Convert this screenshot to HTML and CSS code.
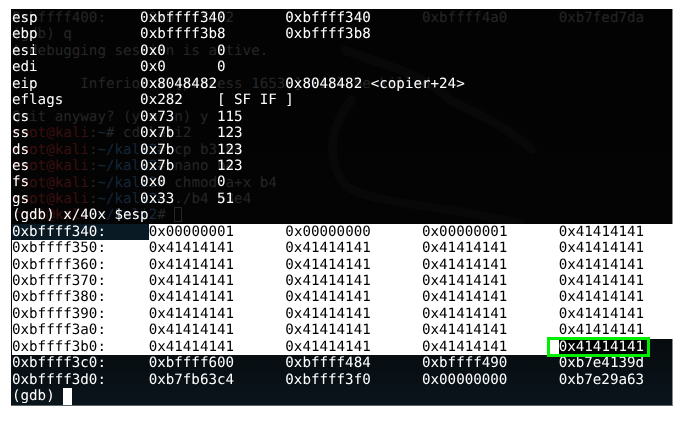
FILE: index.html
```html
<!DOCTYPE html>
<html lang="en">
<head>
<meta charset="utf-8">
<title>gdb</title>
<link rel="stylesheet" href="styles.css">
</head>
<body>
<main class="term">
<svg class="logo" viewBox="0 0 662 397" aria-hidden="true">
<path d="M341 91C319 116 314 151 334 176C359 196 439 196 509 215"/>
<path d="M334 41C369 56 409 61 439 91C469 106 494 116 521 141"/>
</svg>
<pre class="ghost"><span>0xbffff400:     0xbffff3f2      0xbffff340      0xbffff4a0      0xb7fed7da</span>
<span>(gdb) q</span>
<span>A debugging session is active.</span>

<span>        Inferior 1 [process 16536] will be killed.</span>

<span>Quit anyway? (y or n) y</span>
<span><b>root@kali</b>:<i>~</i># cd kali2</span>
<span><b>root@kali</b>:<i>~/kali2</i># cp b3 b4</span>
<span><b>root@kali</b>:<i>~/kali2</i># nano b4</span>
<span><b>root@kali</b>:<i>~/kali2</i># chmod a+x b4</span>
<span><b>root@kali</b>:<i>~/kali2</i># ./b4 b3e4</span>
<span><b>root@kali</b>:<i>~/kali2</i># <em class="hollow"></em></span></pre>
<div class="screen">
<div class="line">esp            0xbffff340       0xbffff340</div>
<div class="line">ebp            0xbffff3b8       0xbffff3b8</div>
<div class="line">esi            0x0      0</div>
<div class="line">edi            0x0      0</div>
<div class="line">eip            0x8048482        0x8048482 &lt;copier+24&gt;</div>
<div class="line">eflags         0x282    [ SF IF ]</div>
<div class="line">cs             0x73     115</div>
<div class="line">ss             0x7b     123</div>
<div class="line">ds             0x7b     123</div>
<div class="line">es             0x7b     123</div>
<div class="line">fs             0x0      0</div>
<div class="line">gs             0x33     51</div>
<div class="line">(gdb) x/40x $esp</div>
<div class="line"><span class="label">0xbffff340:     </span><span class="sel fill">0x00000001      0x00000000      0x00000001      0x41414141</span></div>
<div class="line"><span class="sel fill">0xbffff350:     0x41414141      0x41414141      0x41414141      0x41414141</span></div>
<div class="line"><span class="sel fill">0xbffff360:     0x41414141      0x41414141      0x41414141      0x41414141</span></div>
<div class="line"><span class="sel fill">0xbffff370:     0x41414141      0x41414141      0x41414141      0x41414141</span></div>
<div class="line"><span class="sel fill">0xbffff380:     0x41414141      0x41414141      0x41414141      0x41414141</span></div>
<div class="line"><span class="sel fill">0xbffff390:     0x41414141      0x41414141      0x41414141      0x41414141</span></div>
<div class="line"><span class="sel fill">0xbffff3a0:     0x41414141      0x41414141      0x41414141      0x41414141</span></div>
<div class="line"><span class="sel">0xbffff3b0:     0x41414141      0x41414141      0x41414141      </span><span class="boxed">0x41414141</span></div>
<div class="line">0xbffff3c0:     0xbffff600      0xbffff484      0xbffff490      0xb7e4139d</div>
<div class="line">0xbffff3d0:     0xb7fb63c4      0xbffff3f0      0x00000000      0xb7e29a63</div>
<div class="line">(gdb) <span class="cursor"> </span></div>
</div>
</main>
</body>
</html>
```
FILE: styles.css
```css
html, body {
  margin: 0;
  background: #fff;
}
body {
  padding: 9px 0 0 11px;
  width: 690px;
  height: 423px;
  box-sizing: border-box;
  overflow: hidden;
}
.term {
  position: relative;
  width: 662px;
  height: 397px;
  box-sizing: border-box;
  padding: 1px 0 0 1px;
  background: linear-gradient(180deg, #030303 0%, #040404 70%, #0a141b 100%);
  border-right: 1px solid #8a8a8a;
  border-bottom: 1px solid #5c6468;
  font-family: "DejaVu Sans Mono", monospace;
  font-size: 14.2px;
  line-height: 16.45px;
  color: #fff;
  text-rendering: geometricPrecision;
  filter: blur(0.3px);
}
.logo {
  position: absolute;
  inset: 0;
  width: 662px;
  height: 397px;
  fill: none;
  stroke: #080808;
  stroke-width: 9;
  stroke-linecap: round;
}
.ghost {
  position: absolute;
  top: 1px;
  left: 1px;
  margin: 0;
  font: inherit;
  color: #262626;
}
.ghost b {
  font-weight: normal;
  color: #3a0f0f;
}
.ghost i {
  font-style: normal;
  color: #14283c;
}
.hollow {
  display: inline-block;
  width: 8px;
  height: 15px;
  vertical-align: -3px;
  box-sizing: border-box;
  border: 1px solid #262626;
}
.screen {
  position: relative;
}
.line {
  display: flex;
  height: 16.45px;
  white-space: pre;
}
.label {
  background: #0a1a24;
}
.sel {
  background: #fff;
  color: #000;
}
.fill {
  flex: 1;
  margin-right: -1px;
}
.boxed {
  position: relative;
  background: #000;
}
.boxed::after {
  content: "";
  position: absolute;
  left: -12px;
  top: -2px;
  right: -6px;
  bottom: -2px;
  border: 3px solid #00ee00;
}
.cursor {
  background: #fff;
}
```
